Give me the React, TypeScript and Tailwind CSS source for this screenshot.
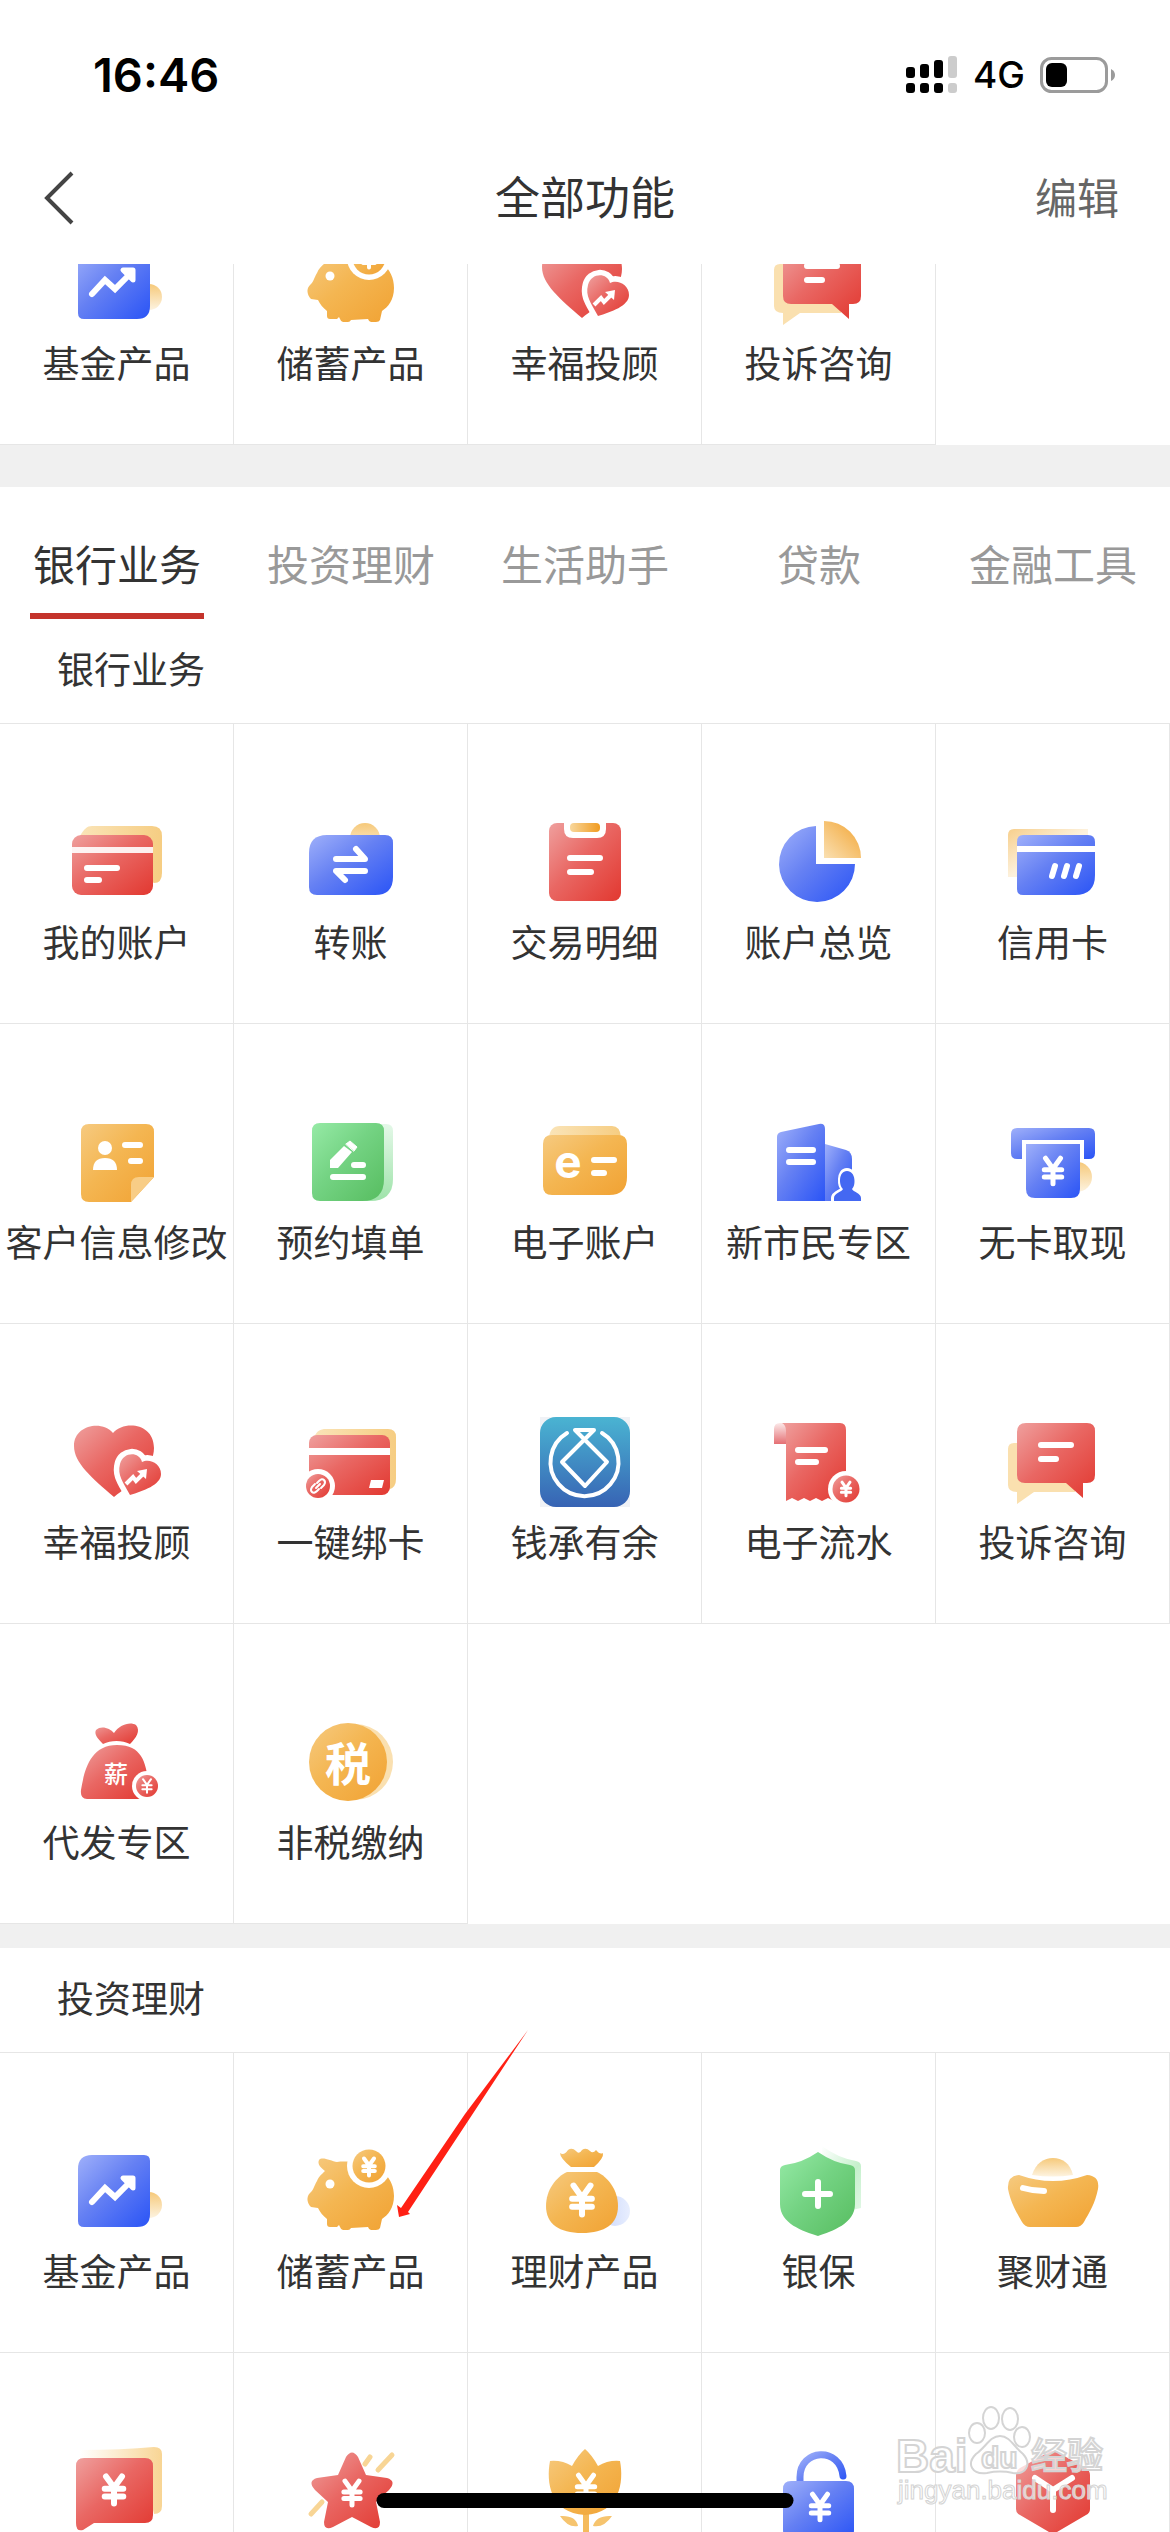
import { useState, type ReactNode } from "react";

const TABS = ["银行业务", "投资理财", "生活助手", "贷款", "金融工具"];

interface Tool {
  icon: ReactNode;
  label?: string;
}

const GRADIENTS = [
  { id: "red", stops: ["#efa09e", "#e96763", "#e23830"] },
  { id: "blue", stops: ["#9fb0fa", "#6580f3", "#2a54f6"] },
  { id: "orange", stops: ["#f6ca80", "#f4b652", "#f1a233"] },
  { id: "green", stops: ["#96eaa6", "#74d383", "#57bd60"] },
];

function Defs() {
  return (
    <svg className="absolute h-0 w-0" aria-hidden="true">
      <defs>
        {GRADIENTS.map((g) => (
          <linearGradient key={g.id} id={g.id} x1="0" y1="0" x2="1" y2="1">
            <stop offset="0" stopColor={g.stops[0]} />
            <stop offset="0.45" stopColor={g.stops[1]} />
            <stop offset="1" stopColor={g.stops[2]} />
          </linearGradient>
        ))}
        <linearGradient id="sand" x1="0" y1="0" x2="1" y2="0">
          <stop offset="0" stopColor="#fae4b8" />
          <stop offset="1" stopColor="#f6cd82" />
        </linearGradient>
        <linearGradient id="sandUp" x1="0" y1="0" x2="0" y2="1">
          <stop offset="0" stopColor="#f6c97a" />
          <stop offset="1" stopColor="#fdf3e0" />
        </linearGradient>
        <linearGradient id="sandFade" x1="0" y1="0" x2="1" y2="1">
          <stop offset="0" stopColor="#f7cf8c" />
          <stop offset="0.5" stopColor="#fdf1dc" />
          <stop offset="1" stopColor="#ffffff" />
        </linearGradient>
        <linearGradient id="sandIn" x1="0" y1="0" x2="1" y2="0">
          <stop offset="0" stopColor="#ffffff" />
          <stop offset="1" stopColor="#f8d594" />
        </linearGradient>
        <linearGradient id="mint" x1="0" y1="0" x2="0" y2="1">
          <stop offset="0" stopColor="#e4f8e8" />
          <stop offset="1" stopColor="#9fe3aa" />
        </linearGradient>
        <linearGradient id="mintFade" x1="0" y1="0" x2="1" y2="1">
          <stop offset="0" stopColor="#ffffff" />
          <stop offset="0.6" stopColor="#c4f0cb" />
          <stop offset="1" stopColor="#e4f8e8" />
        </linearGradient>
        <linearGradient id="clip" x1="0" y1="0" x2="1" y2="0">
          <stop offset="0" stopColor="#f8d79c" />
          <stop offset="1" stopColor="#f09b20" />
        </linearGradient>
        <linearGradient id="slice" x1="0" y1="1" x2="1" y2="0">
          <stop offset="0" stopColor="#fae0b2" />
          <stop offset="1" stopColor="#f2a432" />
        </linearGradient>
        <linearGradient id="curl" x1="0" y1="0" x2="0" y2="1">
          <stop offset="0" stopColor="#fbe9e9" />
          <stop offset="1" stopColor="#e56f73" />
        </linearGradient>
        <linearGradient id="sea" x1="0" y1="0" x2="0" y2="1">
          <stop offset="0" stopColor="#4ab4d2" />
          <stop offset="1" stopColor="#3763b4" />
        </linearGradient>
        <linearGradient id="haze" x1="0" y1="0" x2="1" y2="0">
          <stop offset="0" stopColor="#c9d6fc" />
          <stop offset="1" stopColor="#e8eefe" />
        </linearGradient>
      </defs>
    </svg>
  );
}

function Icon({ children }: { children: ReactNode }) {
  return (
    <svg viewBox="0 0 90 90" className="h-[90px] w-[90px] overflow-visible" fill="none" strokeLinecap="round" strokeLinejoin="round" aria-hidden="true">
      {children}
    </svg>
  );
}

// Yuan sign centred on x, y; s is half its height
function Yuan({ x, y, s, w = 5 }: { x: number; y: number; s: number; w?: number }) {
  return (
    <path
      d={`M${x - s * 0.5} ${y - s * 0.85}L${x} ${y - s * 0.15}L${x + s * 0.5} ${y - s * 0.85}M${x} ${y - s * 0.15}V${y + s * 0.85}M${x - s * 0.58} ${y - s * 0.08}H${x + s * 0.58}M${x - s * 0.58} ${y + s * 0.4}H${x + s * 0.58}`}
      stroke="#fff"
      strokeWidth={w}
    />
  );
}

const accountIcon = (
  <Icon>
    <path d="M8 19C12 12 15 9 20 9H80Q90 9 90 19V56Q90 66 82 66Z" fill="url(#sand)" />
    <rect y="18" width="81" height="60" rx="9" fill="url(#red)" />
    <path d="M0 30H81V36H0Z" fill="#fff" opacity="0.9" />
    <path d="M15 51H45M15 63H27" stroke="#fff" strokeWidth="6" />
  </Icon>
);

const transferIcon = (
  <Icon>
    <circle cx="59" cy="21" r="15" fill="url(#sandUp)" />
    <path d="M21 18H79Q87 18 87 26V60Q87 78 69 78H11Q3 78 3 70V36Q3 18 21 18Z" fill="url(#blue)" />
    <path d="M30 42H59L50 32M59 54H30L39 63" stroke="#fff" strokeWidth="6" />
  </Icon>
);

const detailIcon = (
  <Icon>
    <rect x="9" y="6" width="72" height="78" rx="8" fill="url(#red)" />
    <path d="M24 5H66V12Q66 21 57 21H33Q24 21 24 12Z" fill="#fff" />
    <rect x="30" y="6" width="30" height="9" rx="4" fill="url(#clip)" />
    <path d="M30 41H60M30 55H51" stroke="#fff" strokeWidth="6" />
  </Icon>
);

const overviewIcon = (
  <Icon>
    <path d="M42 9V47H81A38 38 0 1 1 42 9Z" fill="url(#blue)" />
    <path d="M50 4A37 37 0 0 1 87 41H50Z" fill="url(#slice)" />
  </Icon>
);

const creditIcon = (
  <Icon>
    <path d="M6 12H80V60H0V18Q0 12 6 12Z" fill="url(#sandFade)" />
    <path d="M15 18H80Q87 18 87 25V58Q87 78 67 78H15Q9 78 9 72V25Q9 18 15 18Z" fill="url(#blue)" />
    <path d="M9 29H87V35H9Z" fill="#fff" />
    <path d="M47 49L44 59M59 49L56 59M71 49L68 59" stroke="#fff" strokeWidth="6" />
  </Icon>
);

const profileIcon = (
  <Icon>
    <path d="M17 7H74Q82 7 82 15V60L59 85H17Q9 85 9 77V15Q9 7 17 7Z" fill="url(#orange)" />
    <path d="M82 60L59 85V68Q59 60 67 60Z" fill="#f8cd86" />
    <circle cx="33" cy="31" r="7" fill="#fff" />
    <path d="M21 53C21 45 25 41 33 41S45 45 45 53Z" fill="#fff" />
    <path d="M53 28H68M59 44H68" stroke="#fff" strokeWidth="6" />
  </Icon>
);

const formIcon = (
  <Icon>
    <path d="M60 7H80Q87 7 87 14V62Q87 84 64 84H55Z" fill="url(#mint)" />
    <path d="M14 6H70Q78 6 78 14V62Q78 84 56 84H14Q6 84 6 76V14Q6 6 14 6Z" fill="url(#green)" />
    <path d="M24 51V43L38 29L46 35L32 51Z" fill="#fff" />
    <path d="M40 27L44 24L51 30L48 34Z" fill="#fff" stroke="#fff" strokeWidth="1" />
    <path d="M48 48H57M27 60H57" stroke="#fff" strokeWidth="6" />
  </Icon>
);

const eAccountIcon = (
  <Icon>
    <path d="M9 20C10 13 13 9 20 9H72Q80 9 81 20Z" fill="url(#sand)" />
    <path d="M12 18H78Q87 18 87 27V60Q87 78 69 78H12Q3 78 3 69V27Q3 18 12 18Z" fill="url(#orange)" />
    <text x="28" y="61" textAnchor="middle" className="fill-white font-['Inter'] text-[46px] font-bold">e</text>
    <path d="M54 43H74M54 56H64" stroke="#fff" strokeWidth="6" />
  </Icon>
);

const citizenIcon = (
  <Icon>
    <path d="M51 27L72 33Q78 35 78 42V84H51Z" fill="url(#blue)" />
    <path d="M3 20Q3 16 7 15L45 7Q51 6 51 12V84H3Z" fill="url(#blue)" />
    <path d="M15 33H39M15 45H39" stroke="#fff" strokeWidth="6" />
    <path d="M60 84V81C60 76 69 75 70 72C66 69 65 54 73 54S81 69 77 72C78 75 87 76 87 81V84Z" fill="#3a5ff0" stroke="#fff" strokeWidth="6" />
    <path d="M60 84V81C60 76 68 75 69 72C65 69 64 54 73 54S82 69 78 72C79 75 87 76 87 81V84Z" fill="#4468f2" />
    <path d="M56 84H90V90H56Z" fill="#fff" />
  </Icon>
);

const withdrawIcon = (
  <Icon>
    <circle cx="69" cy="60" r="15" fill="url(#sandUp)" />
    <path d="M9 11H81Q87 11 87 17V36Q87 42 81 42H9Q3 42 3 36V17Q3 11 9 11Z" fill="url(#blue)" />
    <path d="M14 23H76V44H14Z" fill="#fff" />
    <path d="M18 27H72V72Q72 81 63 81H27Q18 81 18 72Z" fill="url(#blue)" />
    <Yuan x={45} y={54} s={15} />
  </Icon>
);

const heartIcon = (
  <Icon>
    <path d="M42 80C20 61 2 46 2 29C2 8 30 3 41 16C52 3 82 6 82 31C82 52 60 66 42 80Z" fill="url(#red)" />
    <path d="M58 78C51 65 45 58 48 47C51 35 67 34 70 45C77 41 89 46 89 57C89 68 71 74 58 78Z" fill="#fff" stroke="#fff" strokeWidth="11" />
    <path d="M58 78C51 65 45 58 48 47C51 35 67 34 70 45C77 41 89 46 89 57C89 68 71 74 58 78Z" fill="url(#red)" />
    <path d="M54 67L61 60L64 64L71 57" stroke="#fff" strokeWidth="4" strokeLinecap="butt" strokeLinejoin="miter" />
    <path d="M65 54L75 52L74 62Z" fill="#fff" />
  </Icon>
);

const bindIcon = (
  <Icon>
    <path d="M8 20C11 14 14 12 20 12H82Q90 12 90 20V62Q90 70 84 72Z" fill="url(#sand)" />
    <rect x="3" y="18" width="81" height="60" rx="8" fill="url(#red)" />
    <path d="M3 31H84V38H3Z" fill="#fff" />
    <path d="M65 63H78L76 71H63Z" fill="#fff" />
    <circle cx="12" cy="69" r="17" fill="#fff" />
    <circle cx="12" cy="69" r="12" fill="url(#red)" />
    <path d="M11 66L13 64Q16 61 18 63T18 68L15 71M13 72L11 74Q8 77 6 75T6 70L9 67M10 71L14 67" stroke="#fff" strokeWidth="2" />
  </Icon>
);

const pouchRingIcon = (
  <Icon>
    <path d="M0 0H90V90H0Z" fill="#f0f2f6" />
    <rect width="90" height="90" rx="16" fill="url(#sea)" />
    <path d="M27 16A34 34 0 1 0 62 16" stroke="#fff" strokeWidth="4" />
    <path d="M35 13H54L22 45L45 69L67 45Z" stroke="#fff" strokeWidth="4" />
  </Icon>
);

const statementIcon = (
  <Icon>
    <path d="M0 27V12Q0 6 6 6H12V27Z" fill="url(#curl)" />
    <path d="M8 6H66Q72 6 72 13V84L66 81L60 84L54 81L48 84L42 81L36 84L30 81L24 84L18 81L12 84V14Q12 8 8 6Z" fill="url(#red)" />
    <path d="M24 33H51M24 45H42" stroke="#fff" strokeWidth="6" />
    <circle cx="72" cy="72" r="18" fill="#fff" />
    <circle cx="72" cy="72" r="13.5" fill="url(#red)" />
    <Yuan x={72} y={72} s={8} w={3} />
  </Icon>
);

const complaintIcon = (
  <Icon>
    <path d="M6 26H40V66H67V75H26L9 87V75Q0 75 0 68V32Q0 26 6 26Z" fill="#fae0af" />
    <path d="M18 6H79Q87 6 87 14V58Q87 66 79 66H75V81L58 66H17Q9 66 9 58V15Q9 6 18 6Z" fill="url(#red)" />
    <path d="M33 28H63M33 42H48" stroke="#fff" strokeWidth="6" />
  </Icon>
);

const payrollIcon = (
  <Icon>
    <path d="M31 27C25 21 22 17 24 13C29 8 38 11 42 16C47 8 58 4 64 8C69 14 64 21 58 27C50 23 39 23 31 27Z" fill="url(#red)" />
    <path d="M15 82Q8 82 9 73C12 56 17 28 45 28S74 50 77 69V82Z" fill="url(#red)" />
    <text x="44" y="66" textAnchor="middle" className="fill-white font-['Noto_Sans_CJK_SC',sans-serif] text-[24px] font-medium">薪</text>
    <circle cx="75" cy="69" r="15" fill="#fff" />
    <circle cx="75" cy="69" r="11" fill="url(#red)" />
    <Yuan x={75} y={69} s={8} w={2} />
  </Icon>
);

const taxIcon = (
  <Icon>
    <circle cx="49" cy="45" r="38" fill="#fae0b0" />
    <circle cx="42" cy="45" r="39" fill="url(#orange)" />
    <text x="42" y="64" textAnchor="middle" className="fill-white font-['Noto_Sans_CJK_SC',sans-serif] text-[46px] font-bold">税</text>
  </Icon>
);

const fundIcon = (
  <Icon>
    <circle cx="77" cy="59" r="13" fill="url(#sandUp)" />
    <path d="M20 9H72Q78 9 78 15V68Q78 81 65 81H12Q6 81 6 75V23Q6 9 20 9Z" fill="url(#blue)" />
    <path d="M20 56L33 42L43 51L58 36" stroke="#fff" strokeWidth="6" strokeLinejoin="miter" />
    <path d="M51 32H61V42Z" fill="#fff" stroke="#fff" strokeWidth="5" />
  </Icon>
);

const pigIcon = (
  <Icon>
    <path
      d="M13 14C16 10 25 15 31 16C38 15 50 16 56 17C75 20 88 32 88 50C88 62 82 69 76 73L74 82Q73 84 70 84H65Q63 84 62 81L45 82Q44 84 42 84H37Q35 84 34 81L33 79L31 81H24Q21 81 21 78V73C17 70 14 66 12 62L5 61C1 57 0 51 4 47C7 45 8 40 11 35C13 30 16 28 19 25C15 22 11 18 13 14Z"
      fill="url(#orange)"
    />
    <circle cx="24" cy="38" r="4.5" fill="#fff" />
    <circle cx="63" cy="20" r="22" fill="#fff" />
    <circle cx="63" cy="20" r="16.5" fill="url(#orange)" />
    <Yuan x={63} y={21} s={10} w={4} />
  </Icon>
);

const wealthIcon = (
  <Icon>
    <circle cx="75" cy="65" r="15" fill="url(#haze)" />
    <path d="M20 7Q24 10 28 4Q32 1 36 5Q39 9 42 4Q46 1 50 5Q53 8 56 4Q60 9 63 7Q64 12 54 21H31Q20 12 20 7Z" fill="url(#orange)" />
    <path d="M27 26H57C68 31 78 44 78 60C78 78 65 87 42 87S6 78 6 60C6 44 16 31 27 26Z" fill="url(#orange)" />
    <Yuan x={42} y={54} s={17} w={6} />
  </Icon>
);

const insuranceIcon = (
  <Icon>
    <path d="M48 0Q64 12 82 15Q87 16 87 20V62L50 70Z" fill="url(#mintFade)" />
    <path d="M44 6Q60 17 76 19Q81 20 81 24V58C81 78 58 85 44 90C29 85 6 78 6 58V24Q6 20 11 19Q28 17 44 6Z" fill="url(#green)" />
    <path d="M31 48H56M44 36V60" stroke="#fff" strokeWidth="6" />
  </Icon>
);

const ingotIcon = (
  <Icon>
    <path d="M24 29C28 17 36 12 45 12S62 17 65 29Q45 32 24 29Z" fill="url(#sandUp)" />
    <path d="M11 29Q45 41 79 29Q92 30 90 43C87 58 81 67 76 76Q73 81 68 81H22Q17 81 14 76C9 67 3 58 0 43Q-1 30 11 29Z" fill="url(#orange)" />
    <path d="M15 42Q25 45 36 45" stroke="#fff" strokeWidth="6" />
  </Icon>
);

const noteIcon = (
  <Icon>
    <path d="M8 4Q50 4 82 1Q90 1 90 8V60Q90 68 82 68L70 20H8Z" fill="url(#sandIn)" />
    <path d="M12 12H73Q81 12 81 20V69Q81 77 73 77H22L11 84Q4 86 4 77V20Q4 12 12 12Z" fill="url(#red)" />
    <Yuan x={42} y={44} s={16} w={6} />
  </Icon>
);

const starIcon = (
  <Icon>
    <path d="M86 9L72 24M64 11L59 18M16 56L5 68" stroke="#f8d595" strokeWidth="5" />
    <path
      d="M40 11Q46 2 52 11L60 29L81 32Q91 35 83 44L70 56L74 76Q74 85 65 81L46 71L27 81Q18 85 18 76L22 56L9 44Q1 35 11 32L32 29Z"
      fill="url(#red)"
    />
    <Yuan x={46} y={47} s={14} />
  </Icon>
);

const tulipIcon = (
  <Icon>
    <path d="M46 60V92" stroke="#f5bb5c" strokeWidth="6" />
    <path d="M45 3Q52 9 58 20Q68 14 80 15C84 36 80 67 45 69C10 67 6 36 10 15Q22 14 32 20Q38 9 45 3Z" fill="url(#orange)" />
    <path d="M20 70Q36 69 38 80Q28 82 20 70ZM72 70Q56 69 53 80Q64 82 72 70Z" fill="#f6c46e" />
    <Yuan x={46} y={42} s={15} />
  </Icon>
);

const lockIcon = (
  <Icon>
    <path d="M26 38V31C26 3 66 0 69 30" stroke="url(#blue)" strokeWidth="7" />
    <path d="M17 35H72Q80 35 80 43V84Q80 92 72 92H17Q9 92 9 84V43Q9 35 17 35Z" fill="url(#blue)" />
    <Yuan x={46} y={61} s={15} />
  </Icon>
);

const hexIcon = (
  <Icon>
    <path d="M41 6Q45 4 49 6L78 22Q82 25 82 29V63Q82 67 78 69L49 86Q45 88 41 86L12 69Q8 67 8 63V29Q8 25 12 22Z" fill="url(#red)" />
    <path d="M27 32L45 44L64 32M45 44V64" stroke="#fff" strokeWidth="6" />
  </Icon>
);

const RECENT: Tool[] = [
  { icon: fundIcon, label: "基金产品" },
  { icon: pigIcon, label: "储蓄产品" },
  { icon: heartIcon, label: "幸福投顾" },
  { icon: complaintIcon, label: "投诉咨询" },
];

const BANKING: Tool[] = [
  { icon: accountIcon, label: "我的账户" },
  { icon: transferIcon, label: "转账" },
  { icon: detailIcon, label: "交易明细" },
  { icon: overviewIcon, label: "账户总览" },
  { icon: creditIcon, label: "信用卡" },
  { icon: profileIcon, label: "客户信息修改" },
  { icon: formIcon, label: "预约填单" },
  { icon: eAccountIcon, label: "电子账户" },
  { icon: citizenIcon, label: "新市民专区" },
  { icon: withdrawIcon, label: "无卡取现" },
  { icon: heartIcon, label: "幸福投顾" },
  { icon: bindIcon, label: "一键绑卡" },
  { icon: pouchRingIcon, label: "钱承有余" },
  { icon: statementIcon, label: "电子流水" },
  { icon: complaintIcon, label: "投诉咨询" },
  { icon: payrollIcon, label: "代发专区" },
  { icon: taxIcon, label: "非税缴纳" },
];

const INVESTING: Tool[] = [
  { icon: fundIcon, label: "基金产品" },
  { icon: pigIcon, label: "储蓄产品" },
  { icon: wealthIcon, label: "理财产品" },
  { icon: insuranceIcon, label: "银保" },
  { icon: ingotIcon, label: "聚财通" },
  { icon: noteIcon },
  { icon: starIcon },
  { icon: tulipIcon },
  { icon: lockIcon },
  { icon: hexIcon },
];

function ToolGrid({ tools }: { tools: Tool[] }) {
  return (
    <div className="grid w-full grid-cols-5">
      {tools.map((tool, i) => (
        <button key={i} type="button" className="flex h-[300px] flex-col items-center gap-2.5 border-r border-b border-[#e6e6e6] pt-[93px]">
          {tool.icon}
          {tool.label && <span className="text-[37px] leading-[48px] whitespace-nowrap">{tool.label}</span>}
        </button>
      ))}
    </div>
  );
}

function Section({ title, tools }: { title: string; tools: Tool[] }) {
  return (
    <section>
      <h2 className="flex h-[104px] items-center px-[57px] pb-1.5 text-[37px] leading-[48px]">{title}</h2>
      <div className="border-t border-[#e6e6e6]">
        <ToolGrid tools={tools} />
      </div>
    </section>
  );
}

function StatusBar() {
  return (
    <div className="flex h-[132px] items-center justify-between pt-[18px] pr-[54px] pl-[93px] font-['Inter',sans-serif] text-black">
      <span className="text-[47px] leading-[54px] font-semibold">16:46</span>
      <div className="flex items-center gap-[15px]">
        <svg viewBox="0 0 52 38" className="h-[38px] w-[52px]" aria-hidden="true">
          <rect y="11" width="9" height="11" rx="3" />
          <rect x="14" y="8" width="9" height="14" rx="3" />
          <rect x="28" y="4" width="9" height="18" rx="3" />
          <rect x="42" width="9" height="22" rx="3" fill="#ccc" />
          <rect y="27" width="9" height="10" rx="3" />
          <rect x="14" y="27" width="9" height="10" rx="3" />
          <rect x="28" y="27" width="9" height="10" rx="3" />
          <rect x="42" y="27" width="9" height="10" rx="3" fill="#ccc" />
        </svg>
        <span className="text-[37px] leading-[54px] font-medium">4G</span>
        <svg viewBox="0 0 76 36" className="h-[36px] w-[76px]" aria-hidden="true">
          <rect x="1.5" y="1.5" width="65" height="33" rx="10" fill="none" stroke="#9b9b9b" strokeWidth="3" />
          <rect x="6" y="6" width="21" height="24" rx="6" />
          <path d="M71 12Q75 14 75 18T71 24Z" fill="#9b9b9b" />
        </svg>
      </div>
    </div>
  );
}

function Watermark() {
  return (
    <svg viewBox="0 0 212 106" className="absolute right-[62px] bottom-[24px] h-[106px] w-[212px] overflow-visible" fill="#fff" fillOpacity="0.7" stroke="#d4d4d4" strokeWidth="2" aria-hidden="true">
      <text x="0" y="70" className="font-['Liberation_Sans'] text-[46px] font-bold">Bai</text>
      <ellipse cx="81" cy="31" rx="8" ry="10" />
      <ellipse cx="95" cy="16" rx="8" ry="11" />
      <ellipse cx="114" cy="17" rx="8" ry="11" />
      <ellipse cx="126" cy="35" rx="8" ry="10" />
      <path d="M104 34C114 34 118 45 127 52C136 62 130 73 117 71C108 69 100 69 91 71C76 73 70 62 80 52C90 45 94 34 104 34Z" />
      <text x="85" y="66" className="font-['Liberation_Sans'] text-[30px] font-bold">du</text>
      <text x="135" y="67" className="font-['Noto_Sans_CJK_SC',sans-serif] text-[36px] font-medium">经验</text>
      <text x="2" y="97" strokeWidth="1" className="font-['Liberation_Sans'] text-[26px]">jingyan.baidu.com</text>
    </svg>
  );
}

export default function App() {
  const [tab, setTab] = useState(0);

  return (
    <div className="relative flex h-screen flex-col overflow-hidden bg-white font-['Noto_Sans_CJK_SC',sans-serif] text-[#333]">
      <Defs />
      <StatusBar />
      <header className="grid h-[132px] shrink-0 grid-cols-3 items-center">
        <button type="button" className="justify-self-start pl-[43px]" aria-label="返回">
          <svg viewBox="0 0 32 54" className="h-[54px] w-[32px]" fill="none" stroke="#444" strokeWidth="4" aria-hidden="true">
            <path d="M29 2L4 27L29 52" />
          </svg>
        </button>
        <h1 className="pb-1 text-center text-[45px] leading-[54px]">全部功能</h1>
        <button type="button" className="justify-self-end pr-[51px] pb-1 text-[42px] leading-[54px] text-[#666]">编辑</button>
      </header>

      <main className="min-h-0 flex-1 overflow-hidden">
        <div className="flex h-[181px] items-end overflow-hidden">
          <ToolGrid tools={RECENT} />
        </div>
        <div className="h-[42px] bg-[#f0f0f0]" />
        <nav className="grid h-[132px] grid-cols-5">
          {TABS.map((name, i) => (
            <button key={name} type="button" onClick={() => setTab(i)} className={`flex flex-col items-center justify-between pt-[49px] text-[42px] leading-[54px] ${i === tab ? "text-[#333]" : "text-[#999]"}`}>
              {name}
              <span className={`h-[6px] w-[174px] ${i === tab ? "bg-[#c4332b]" : ""}`} />
            </button>
          ))}
        </nav>
        <Section title="银行业务" tools={BANKING} />
        <div className="h-6 bg-[#f0f0f0]" />
        <Section title="投资理财" tools={INVESTING} />
      </main>

      {/* pointer to the savings entry */}
      <svg viewBox="0 0 134 190" className="absolute top-[2029px] left-[396px] h-[190px] w-[134px]" fill="#ff2014" aria-hidden="true">
        <path d="M132 1L69 85L5 179L1 176L3 188L14 185L12 183L74 89Z" />
      </svg>
      <Watermark />
      <div className="absolute bottom-6 left-1/2 h-[15px] w-[417px] -translate-x-1/2 rounded-full bg-black" />
    </div>
  );
}
